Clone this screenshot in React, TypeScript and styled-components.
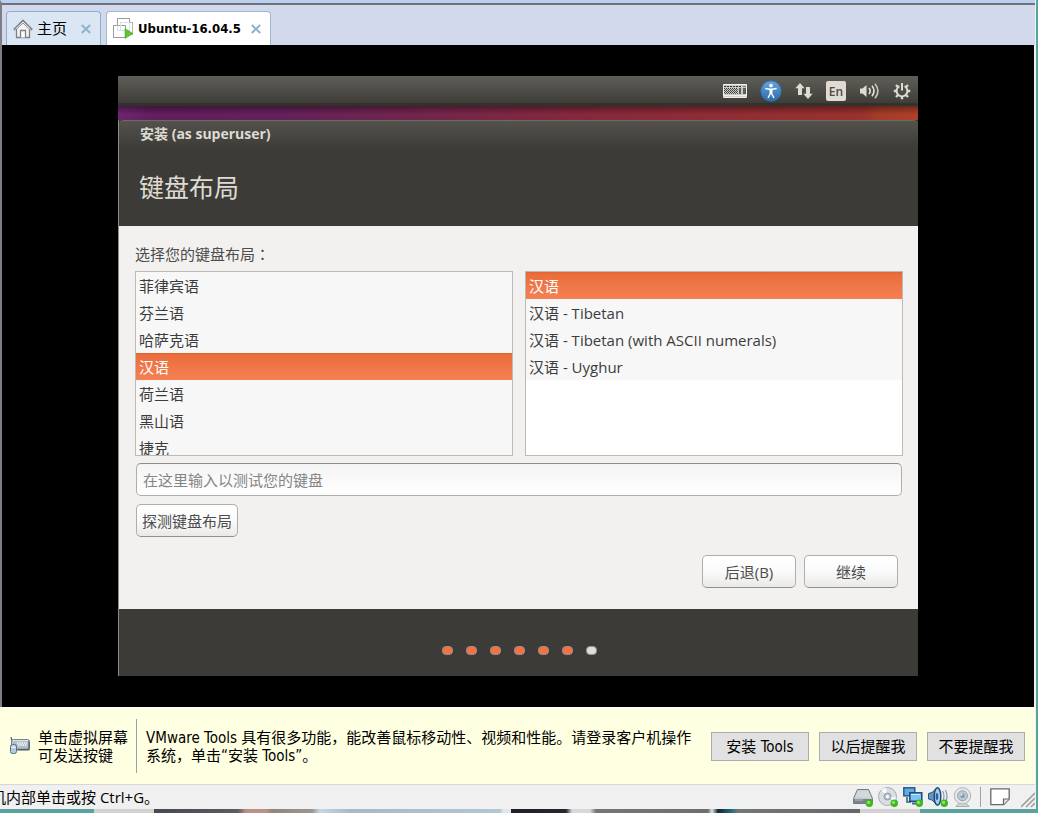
import React from "react";
import styled, { createGlobalStyle } from "styled-components";

const hostFont = `"DejaVu Sans Condensed", "Noto Sans CJK SC", sans-serif`;
const guestFont = `"Open Sans", "Noto Sans CJK SC", sans-serif`;

const GlobalStyle = createGlobalStyle`
  *, *::before, *::after { box-sizing: border-box; }
  body { margin: 0; background: #5aa39c; font-family: ${hostFont}; font-size: 15px; color: #000; }
  button, input, select { font-family: inherit; font-size: inherit; }
  svg { display: block; flex: none; }
`;

const Page = styled.div`
  min-height: 100vh;
  display: flex;
  flex-direction: column;
`;

const HostWindow = styled.div`
  flex: 1;
  display: flex;
  flex-direction: column;
  margin-right: 2px;
  border-right: 1px solid #e8f2f2;
  background: #f0f0f0;
`;

/* ---------- tabs ---------- */

const TabBar = styled.nav`
  display: flex;
  align-items: flex-end;
  gap: 5px;
  height: 45px;
  padding-left: 4px;
  border-top: 3px solid #b9d1ee;
  border-left: 2px solid #7c7f86;
  background: #d3d9ed;
  box-shadow: inset 0 2px 0 #6f7177;
`;

const Tab = styled.div<{ $active?: boolean }>`
  display: flex;
  align-items: center;
  gap: ${(p) => (p.$active ? "10px" : "14px")};
  height: 34px;
  padding: 0 9px 0 6px;
  border: 1px solid ${(p) => (p.$active ? "#9fb9d0" : "#8eafcc")};
  border-bottom: 0;
  border-radius: 4px 4px 0 0;
  background: ${(p) => (p.$active ? "#fff" : "#dbe6f4")};
  font-size: ${(p) => (p.$active ? "13px" : "15px")};
  font-weight: ${(p) => (p.$active ? 700 : 400)};
`;

const TabButton = styled.button`
  display: flex;
  align-items: center;
  gap: 4px;
  padding: 0;
  border: 0;
  background: none;
  font-weight: inherit;
  line-height: 20px;
  color: inherit;
`;

const CloseButton = styled.button`
  padding: 0;
  border: 0;
  background: none;
`;

/* ---------- guest display ---------- */

const Display = styled.main`
  flex: 1;
  display: flex;
  align-items: center;
  justify-content: center;
  margin-right: 1px;
  border-left: 2px solid #7c7f86;
  background: #000;
`;

const Guest = styled.div`
  width: 100%;
  max-width: 800px;
  font-family: ${guestFont};
  color: #3c3b37;
  background: #3c3b37;
`;

const Panel = styled.header`
  display: flex;
  align-items: center;
  justify-content: flex-end;
  gap: 13px;
  height: 30px;
  padding-right: 7px;
  background: linear-gradient(#5f5e59, #3f3e39 88%, #32312b 92%);
`;

const Language = styled.span`
  display: grid;
  place-items: center;
  width: 20px;
  height: 20px;
  border-radius: 2px;
  background: #dfdbd2;
  color: #4c4a45;
  font-size: 12px;
  font-weight: 600;
`;

const Wallpaper = styled.div`
  height: 14px;
  background:
    linear-gradient(rgba(0, 0, 0, 0.35), transparent 60%),
    linear-gradient(90deg, #6f2570, #621e5e 4%, #64205a 20%, #6c2451 31%, #82283f 55%, #8f2d35 75%, #99322d 93%, #a43c29 95%, #ad4029);
`;

const Installer = styled.section`
  border-left: 1px solid #8d8b86;
`;

const Heading = styled.header`
  height: 106px;
  padding-left: 20px;
  border-top: 1px solid #6a6963;
  border-radius: 5px 5px 0 0;
  background: linear-gradient(#53524d, #3c3b37 28px);
  color: #dfdbd2;
`;

const WindowTitle = styled.div`
  padding-left: 1px;
  font-size: 14px;
  font-weight: 700;
  line-height: 26px;
`;

const Title = styled.h1`
  margin: 22px 0 0;
  font-size: 25px;
  font-weight: 400;
  line-height: 36px;
`;

const Form = styled.form`
  display: flex;
  flex-direction: column;
  height: 383px;
  padding: 18px 15px 21px 16px;
  background: #f2f1f0;
`;

const Prompt = styled.label`
  margin-bottom: 6px;
  font-family: "Open Sans", "Noto Sans CJK TC", sans-serif;
  line-height: 21px;
  color: #4c4c4c;
`;

const Lists = styled.div`
  display: grid;
  grid-template-columns: 1fr 1fr;
  gap: 12px;
`;

const ListBox = styled.select`
  height: 185px;
  padding: 0;
  border: 1px solid #bdbab6;
  border-radius: 0;
  outline: 0;
  background: #fff;
  overflow: hidden;
  scrollbar-width: none;

  option {
    height: 27px;
    padding: 3px;
    background: #f7f7f7;
    color: #3c3c3c;
    line-height: 21px;
  }
  option:checked {
    background: linear-gradient(#e2622f, #ea6d3c 2px, #f58154);
    color: #fff;
  }
`;

const TestInput = styled.input`
  height: 33px;
  margin: 7px 1px 8px;
  padding: 0 6px;
  border: 1px solid #b0aeab;
  border-top-color: #8f8d8a;
  border-radius: 5px;
  outline: 0;
  background: linear-gradient(#f4f4f4, #fff);
  &::placeholder { color: #858585; }
`;

const GuestButton = styled.button<{ $wide?: boolean }>`
  height: 33px;
  width: ${(p) => (p.$wide ? "94px" : "auto")};
  margin-left: ${(p) => (p.$wide ? "0" : "1px")};
  padding: 0 5px;
  border: 1px solid #b0aeab;
  border-bottom-color: #92908d;
  border-radius: 5px;
  background: linear-gradient(#fff, #fafafa 50%, #eae9e8);
  color: #4c4c4c;
  white-space: nowrap;
  align-self: flex-start;
`;

const Actions = styled.div`
  display: flex;
  justify-content: flex-end;
  gap: 8px;
  margin-top: auto;
  padding-right: 5px;
`;

const Progress = styled.footer`
  display: flex;
  justify-content: center;
  gap: 13px;
  height: 67px;
  padding: 37px 0 0 1px;
`;

const Dot = styled.span<{ $done: boolean }>`
  width: 11px;
  height: 9px;
  border: 1px solid #96928b;
  border-radius: 4px;
  background: ${(p) => (p.$done ? "#f27341" : "#dedede")};
`;

/* ---------- notice and status bar ---------- */

const Notice = styled.aside`
  display: flex;
  align-items: center;
  height: 77px;
  padding: 0 10px 0 9px;
  border-top: 1px solid #fff;
  background: #ffffe1;
  line-height: 18px;
`;

const Hint = styled.div`
  margin-left: 7px;
  padding: 2px 8px 0 0;
  white-space: nowrap;
`;

const Message = styled.p`
  display: flex;
  flex-direction: column;
  justify-content: center;
  flex: 1;
  height: 54px;
  margin: 0 10px 0 0;
  padding: 2px 0 0 9px;
  border-left: 1px solid #a0a0a8;
`;

const NoticeButtons = styled.div`
  display: flex;
  gap: 10px;
`;

const NoticeButton = styled.button`
  width: 98px;
  height: 29px;
  padding: 0 0 2px;
  border: 1px solid #adadad;
  background: #e1e1e1;
  white-space: nowrap;
`;

const StatusBar = styled.footer`
  display: flex;
  align-items: center;
  height: 25px;
  border-top: 1px solid #d7d7d7;
  background: #f0f0f0;
  overflow: hidden;
`;

const StatusText = styled.span`
  flex: 1;
  margin-left: -9px;
  padding-bottom: 2px;
  font-family: "Open Sans", "Noto Sans CJK SC", sans-serif;
  white-space: nowrap;
`;

const Devices = styled.div`
  display: flex;
  align-items: center;
  gap: 5px;
`;

const Separator = styled.i`
  width: 1px;
  height: 20px;
  margin: 0 4px 0 2px;
  background: #a0a0a0;
`;

const Grip = styled.svg`
  margin-left: 6px;
`;

const Desktop = styled.div`
  height: 4px;
  background: linear-gradient(
    90deg,
    #5aa39c 94px, #d2d2d2 94px, #d2d2d2 154px, #454950 154px, #5b5c62 238px,
    #bb9186 246px, #bb9186 266px, #8f877d 272px, #9c968c 312px, #c9d6e2 320px,
    #a9b9c6 350px, #b2c6d3 500px, #dfe5ea 503px, #dfe5ea 511px, #1d2028 511px,
    #24272d 566px, #d5d9dc 572px, #d5d9dc 590px, #767674 596px, #6e6f6c 708px,
    #e0e6e8 712px, #16242f 718px, #2b6f7c 732px, #74777a 738px, #63676b 860px,
    #d2d2d2 860px, #d2d2d2 920px, #5aa39c 920px
  );
`;

/* ---------- icons ---------- */

const CloseIcon = () => (
  <svg width="10" height="10" viewBox="0 0 10 10" stroke="#8fb3cd" strokeWidth="2">
    <path d="M.8 1l8.400 8M9.200 1L.8 9" />
  </svg>
);

const HomeIcon = () => (
  <svg width="20" height="20" viewBox="0 0 20 20" fill="none" stroke="#808084" strokeWidth="1.3">
    <path d="M3.500 9.500v9h13v-9L10 3.500z" fill="#f4f4f4" />
    <path d="M1 10.800L10 2l9 8.800" fill="none" strokeWidth="2.400" />
    <path d="M2.300 10.300L10 3l7.700 7.300" stroke="#fff" strokeWidth=".9" />
    <path d="M7.500 18.500v-7h5v7" fill="#fff" />
  </svg>
);

const MachineIcon = () => (
  <svg width="21" height="21" viewBox="0 0 21 21" fill="none" stroke="#9b9b9b">
    <rect x="4.500" y="0.500" width="12" height="12" fill="#fff" />
    <rect x="7.500" y="4.500" width="12" height="12" fill="#fff" stroke="#b4b4b4" />
    <rect x="0.500" y="7.500" width="12" height="12" fill="#fff" />
    <path d="M4.500 7.500v5h8M7.500 12V4.500h9v8h-5" stroke="#d3e2ec" />
    <path d="M12 10.500l8 5-8 5z" fill="#5fc32e" stroke="#48ad24" strokeWidth=".6" />
  </svg>
);

const KeyboardIcon = () => (
  <svg width="24" height="14" viewBox="0 0 24 14">
    <rect width="24" height="14" rx="1" fill="#f0efed" />
    <rect x="1" y="1" width="22" height="10" fill="#c9c9c7" />
    <path d="M1 2.500h18" stroke="#2b2b28" strokeDasharray="2 1" />
    <path d="M1 4.500h14M1 6.500h14M1 8.500h14" stroke="#3a3a36" strokeDasharray="1 1" />
    <path d="M2 5.500h13M2 7.500h13M2 9.500h13" stroke="#55554f" strokeDasharray="1 1" />
    <path d="M16 5h2M16 7h2M16 9h2M20 5h3M20 7h3M20 9h3" stroke="#3a3a36" strokeWidth="1.300" />
    <path d="M20 2.500h3" stroke="#3da52d" />
    <path d="M0 12.500h24" stroke="#d5d4d0" />
  </svg>
);

const AccessIcon = () => (
  <svg width="22" height="22" viewBox="0 0 22 22">
    <defs>
      <linearGradient id="access" x2="0" y2="1">
        <stop stopColor="#67a6dc" />
        <stop offset="1" stopColor="#2c6bad" />
      </linearGradient>
    </defs>
    <circle cx="11" cy="11" r="10.200" fill="url(#access)" stroke="#3273ae" />
    <circle cx="11" cy="5.600" r="1.800" fill="#fff" />
    <path d="M5.300 8.500l4.700.8h2l4.700-.8M11 9v4M11 12.500l-3 5.300M11 12.500l3 5.300" fill="none" stroke="#fff" strokeWidth="1.400" />
    <path d="M9.500 9h3v4.500h-3z" fill="#fff" />
  </svg>
);

const NetworkIcon = () => (
  <svg width="18" height="18" viewBox="0 0 18 18" fill="#dfdbd2">
    <path d="M5 1l4.700 5.300H7V13H3V6.300H.3zM13 17l-4.700-5.300H11V5h4v6.700h2.700z" />
  </svg>
);

const VolumeIcon = () => (
  <svg width="21" height="18" viewBox="0 0 21 18" fill="none" stroke="#dfdbd2" strokeWidth="1.700">
    <path d="M1 6.500h2.500L7.500 3v12l-4-3.500H1z" fill="#dfdbd2" stroke="none" />
    <path d="M10 6q2.400 3 0 6" />
    <path d="M13 3.800q4 5.200 0 10.400" />
    <path d="M16 1.800q5.800 7.200 0 14.400" stroke="#c4c1b9" />
  </svg>
);

const SessionIcon = () => (
  <svg width="18" height="18" viewBox="0 0 18 18" fill="none" stroke="#dfdbd2">
    <path d="M6.400 4.200a5.400 5.400 0 1 0 5.200 0" strokeWidth="1.900" />
    <path d="M9 1v7.500" strokeWidth="2" />
    <path d="M.8 9h2.700M14.500 9h2.700M3 3l2 2M13 5l2-2M3 15l2-2M13 13l2 2M9 14.500v2.700" strokeWidth="2.400" />
  </svg>
);

const InputIcon = () => (
  <svg width="22" height="18" viewBox="0 0 22 18">
    <path d="M2 0l1 4" stroke="#4b5b66" strokeWidth="1.200" />
    <rect x="2.500" y="2.500" width="18" height="10.500" rx="2" fill="#b3bfc7" stroke="#77848e" />
    <path d="M4 3.500h15" stroke="#dfe6ea" />
    <path d="M8 6h10M9 8h9" stroke="#f6f8fa" strokeWidth="1.300" strokeDasharray="1.500 .8" />
    <path d="M20 4.500v8H8.500" fill="none" stroke="#55626d" strokeWidth="1.300" />
    <rect x="1.500" y="7.500" width="6" height="9" rx="2" fill="#b2cae0" stroke="#526f8c" />
    <path d="M2 10.500h5M4.500 8.500v2" stroke="#eaf2f9" />
  </svg>
);

const Ready = () => (
  <>
    <circle cx="16.300" cy="16.300" r="3.700" fill="#3fb51f" />
    <circle cx="15.600" cy="15.400" r="1.700" fill="#8be45f" />
  </>
);

const DeviceSvg = styled.svg.attrs({ width: 20, height: 20, viewBox: "0 0 20 20", fill: "none" })``;

const DiskIcon = () => (
  <DeviceSvg>
    <path d="M4.500 2.500h11l4 9v5h-19v-5z" fill="#c5cad0" stroke="#737a82" />
    <path d="M5 3.500h10l3 7H2z" fill="#d3d8dd" />
    <path d="M1 12h18v4H1z" fill="#7a828b" />
    <path d="M2 13h8" stroke="#b7bec5" />
    <Ready />
  </DeviceSvg>
);

const DiscIcon = () => (
  <DeviceSvg>
    <circle cx="9.500" cy="9.500" r="9" fill="#dadde1" stroke="#a7acb2" />
    <path d="M9.500 9.500L3 3a9 9 0 0 1 5-2.300zM9.500 9.500l7 5a9 9 0 0 0 1.500-4z" fill="#f8f9fb" />
    <circle cx="9.500" cy="9.500" r="3.500" fill="#bac6d1" stroke="#929aa3" />
    <circle cx="9.500" cy="9.500" r="1.500" fill="#fff" />
    <Ready />
  </DeviceSvg>
);

const LanIcon = () => (
  <DeviceSvg>
    <rect x="0.800" y="0.800" width="11" height="8" fill="#63abe2" stroke="#23557f" strokeWidth="1.400" />
    <path d="M4 10v5h4" stroke="#356687" strokeWidth="1.600" />
    <rect x="6.800" y="5.800" width="12" height="8.500" fill="#7cc3f5" stroke="#1b4b76" strokeWidth="1.500" />
    <path d="M8 7.500h9" stroke="#c9e9ff" />
    <path d="M9 16.500h7" stroke="#496579" strokeWidth="2" />
    <Ready />
  </DeviceSvg>
);

const SoundIcon = () => (
  <DeviceSvg>
    <path d="M.5 6.500l3.500-1L9 1v17l-5-5-3.500-1z" fill="#6495c3" stroke="#295782" />
    <ellipse cx="9.500" cy="9.500" rx="3.300" ry="8.700" fill="#a6cced" stroke="#194672" strokeWidth="1.400" />
    <ellipse cx="9" cy="9.500" rx="1.300" ry="3.500" fill="#2c6397" />
    <path d="M14.500 4q3 5 0 11M17.500 3q3 7 0 12" stroke="#8397ab" strokeWidth="1.200" />
    <Ready />
  </DeviceSvg>
);

const WebcamIcon = () => (
  <DeviceSvg>
    <path d="M4 18q5.500-4 11 0l1 1.500H3z" fill="#d4d8dc" stroke="#a9aeb4" />
    <circle cx="9.500" cy="8.800" r="8.200" fill="#e5e8eb" stroke="#adb2b8" />
    <circle cx="9.500" cy="8.800" r="5" fill="#bdc8d1" stroke="#97a4af" />
    <circle cx="9.500" cy="8.800" r="2.200" fill="#8098ac" />
    <circle cx="8.500" cy="7.800" r="1" fill="#eff5fa" />
  </DeviceSvg>
);

const NoteIcon = () => (
  <DeviceSvg>
    <path d="M.8 1.800h18.400V12l-5.500 5.700H.8z" fill="#fff" stroke="#686868" strokeWidth="1.300" />
    <path d="M19 12h-5.500v5.500" fill="#e3e3e3" stroke="#686868" strokeWidth="1.200" />
  </DeviceSvg>
);

const GripIcon = () => (
  <Grip width="14" height="22" viewBox="0 0 14 22" stroke="#a0a0a0" strokeWidth="1.600">
    <path d="M0 21L14 7M5 21l9-9M10 21l4-4" />
  </Grip>
);

/* ---------- page ---------- */

const languages = ["菲律宾语", "芬兰语", "哈萨克语", "汉语", "荷兰语", "黑山语", "捷克"];
const variants = ["汉语", "汉语 - Tibetan", "汉语 - Tibetan (with ASCII numerals)", "汉语 - Uyghur"];
const steps = [true, true, true, true, true, true, false];

export default function App() {
  return (
    <Page>
      <GlobalStyle />
      <HostWindow>
        <TabBar>
          <Tab>
            <TabButton><HomeIcon />主页</TabButton>
            <CloseButton aria-label="关闭"><CloseIcon /></CloseButton>
          </Tab>
          <Tab $active>
            <TabButton><MachineIcon />Ubuntu-16.04.5</TabButton>
            <CloseButton aria-label="关闭"><CloseIcon /></CloseButton>
          </Tab>
        </TabBar>

        <Display>
          <Guest>
            <Panel>
              <KeyboardIcon />
              <AccessIcon />
              <NetworkIcon />
              <Language>En</Language>
              <VolumeIcon />
              <SessionIcon />
            </Panel>
            <Wallpaper />
            <Installer>
              <Heading>
                <WindowTitle>安装 (as superuser)</WindowTitle>
                <Title>键盘布局</Title>
              </Heading>
              <Form onSubmit={(e) => e.preventDefault()}>
                <Prompt htmlFor="layout">选择您的键盘布局：</Prompt>
                <Lists>
                  <ListBox id="layout" size={7} defaultValue="汉语">
                    {languages.map((name) => <option key={name}>{name}</option>)}
                  </ListBox>
                  <ListBox aria-label="键盘布局" size={7} defaultValue="汉语">
                    {variants.map((name) => <option key={name}>{name}</option>)}
                  </ListBox>
                </Lists>
                <TestInput aria-label="测试键盘" placeholder="在这里输入以测试您的键盘" />
                <GuestButton type="button">探测键盘布局</GuestButton>
                <Actions>
                  <GuestButton $wide type="button">后退(B)</GuestButton>
                  <GuestButton $wide type="submit">继续</GuestButton>
                </Actions>
              </Form>
              <Progress>
                {steps.map((done, i) => <Dot key={i} $done={done} />)}
              </Progress>
            </Installer>
          </Guest>
        </Display>

        <Notice>
          <InputIcon />
          <Hint>单击虚拟屏幕<br />可发送按键</Hint>
          <Message>VMware Tools 具有很多功能，能改善鼠标移动性、视频和性能。请登录客户机操作系统，单击“安装 Tools”。</Message>
          <NoticeButtons>
            <NoticeButton>安装 Tools</NoticeButton>
            <NoticeButton>以后提醒我</NoticeButton>
            <NoticeButton>不要提醒我</NoticeButton>
          </NoticeButtons>
        </Notice>

        <StatusBar>
          <StatusText>机内部单击或按 Ctrl+G。</StatusText>
          <Devices>
            <DiskIcon />
            <DiscIcon />
            <LanIcon />
            <SoundIcon />
            <WebcamIcon />
            <Separator />
            <NoteIcon />
            <GripIcon />
          </Devices>
        </StatusBar>
      </HostWindow>
      <Desktop />
    </Page>
  );
}
